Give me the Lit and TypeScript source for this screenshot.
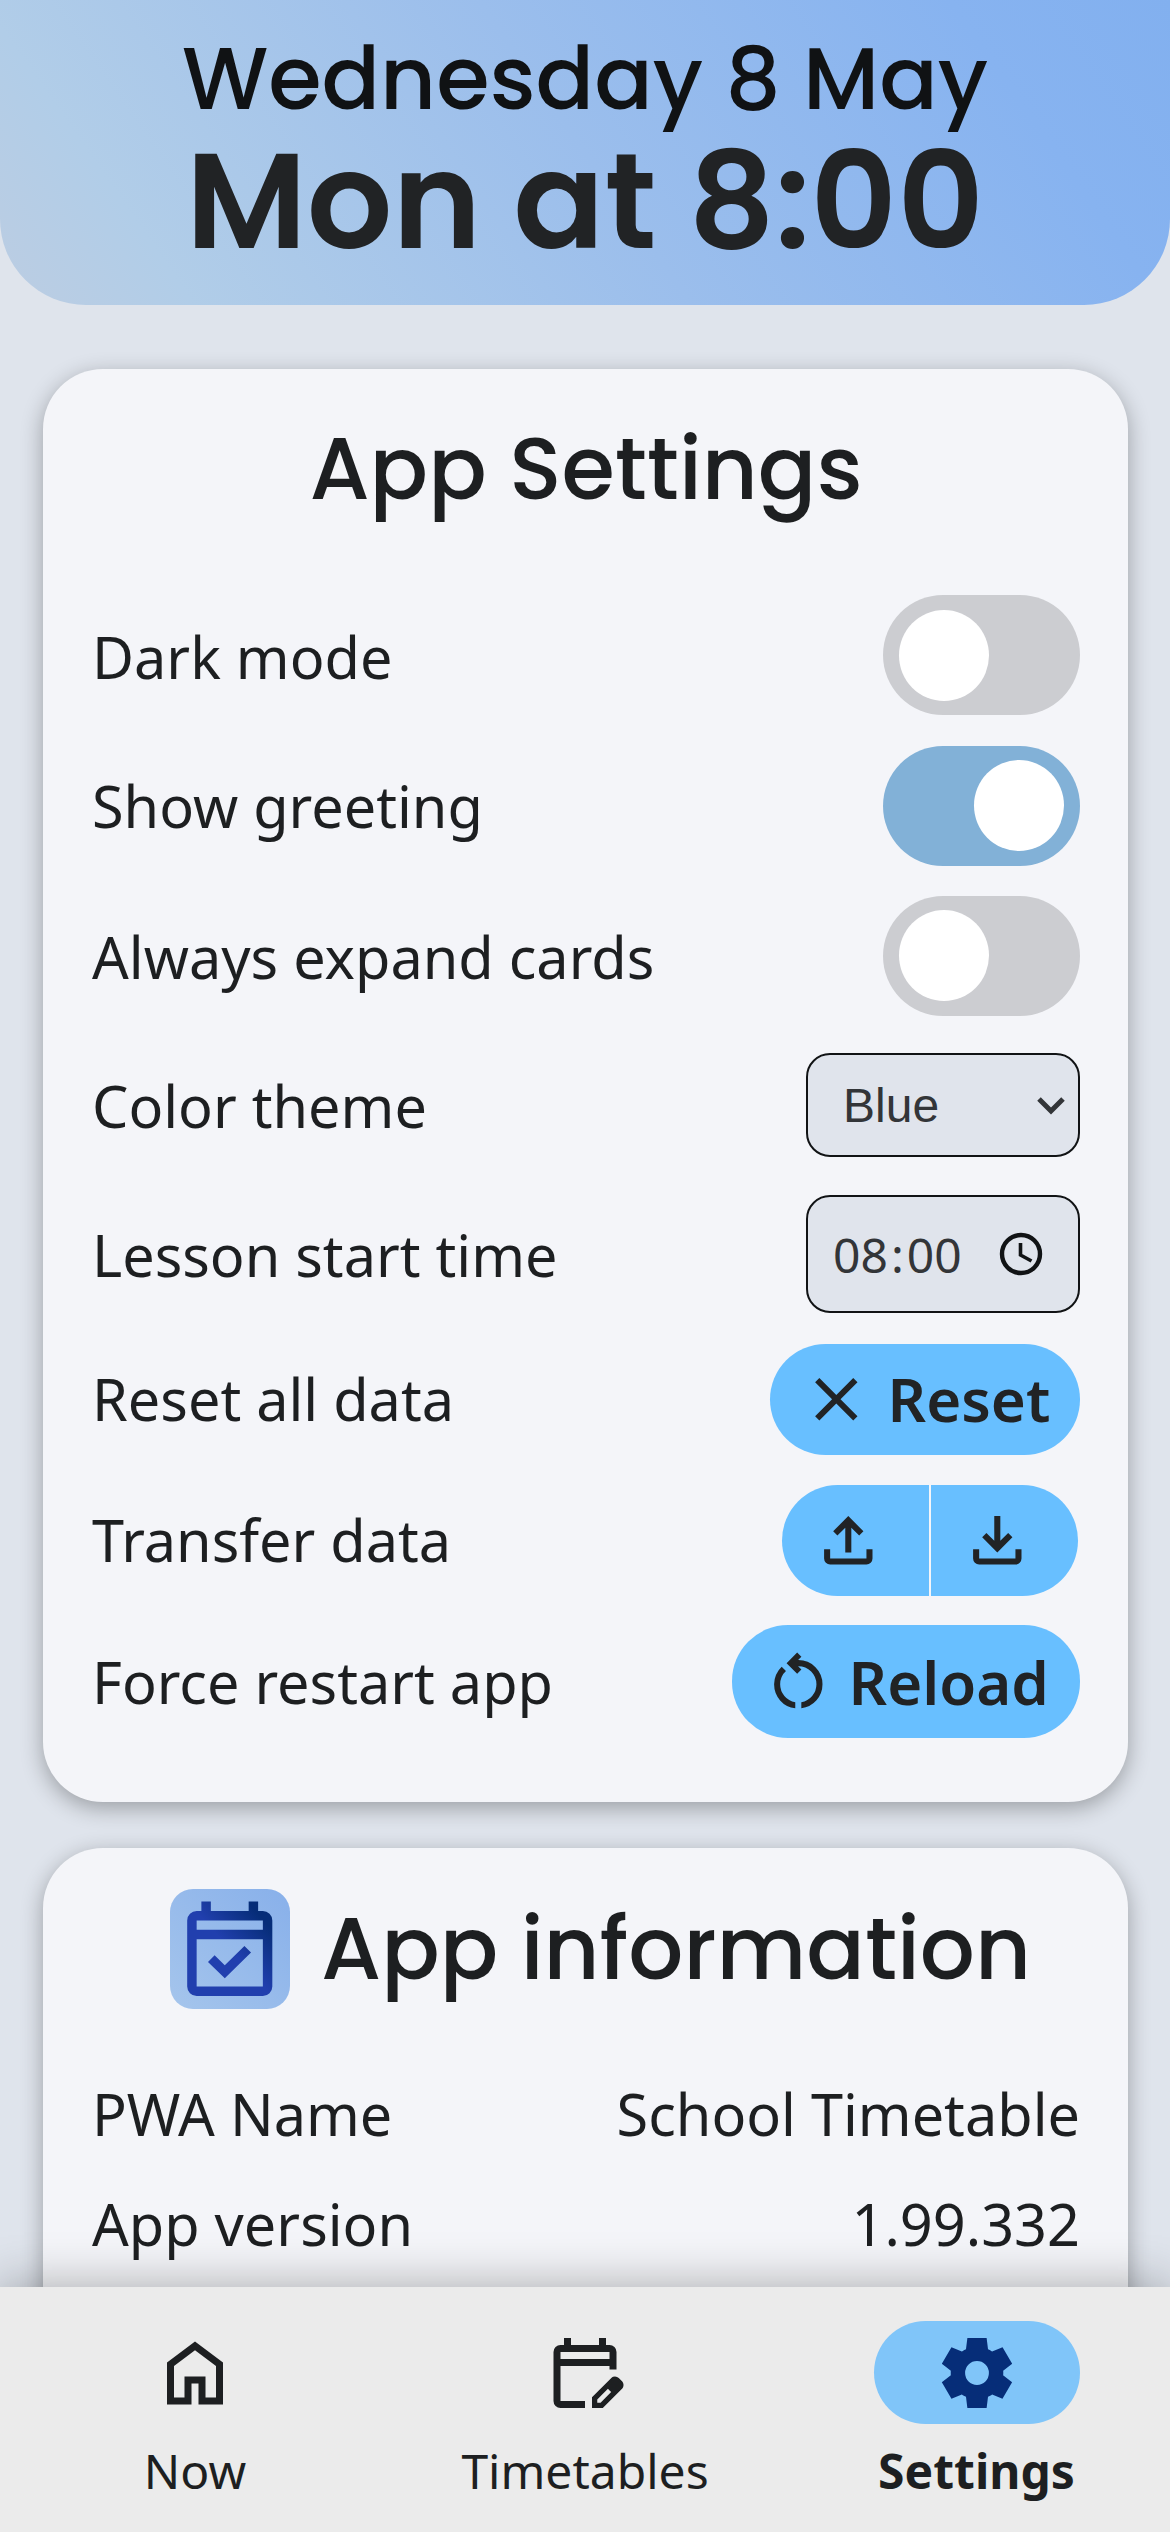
import { LitElement, html, css, svg } from "lit";
import { customElement } from "lit/decorators.js";

const icon = (cls: string, d: string) =>
  html`<svg class=${cls} viewBox="0 0 24 24" aria-hidden="true"><path d=${d}></path></svg>`;

const CLOSE = "M6.4 19 5 17.6l5.6-5.6L5 6.4 6.4 5l5.6 5.6L17.6 5 19 6.4 13.4 12l5.6 5.6-1.4 1.4-5.6-5.6Z";
const TRAY = "M6 20q-.825 0-1.412-.587Q4 18.825 4 18v-3h2v3h12v-3h2v3q0 .825-.587 1.413Q18.825 20 18 20Z";
const UPLOAD = "M11 16V7.85l-2.6 2.6L7 9l5-5 5 5-1.4 1.45-2.6-2.6V16Z" + TRAY;
const DOWNLOAD = "M12 16 7 11l1.4-1.45 2.6 2.6V4h2v8.15l2.6-2.6L17 11Z" + TRAY;
const RESTART =
  "M11 20.95q-3.025-.375-5.012-2.638Q4 16.05 4 13q0-1.65.65-3.163Q5.3 8.325 6.5 7.2l1.425 1.425q-.95.85-1.437 1.975Q6 11.725 6 13q0 2.2 1.4 3.887 1.4 1.688 3.6 2.063Zm2 0v-2q2.175-.4 3.588-2.075Q18 15.2 18 13q0-2.5-1.75-4.25T12 7h-.075l1.1 1.1-1.4 1.4-3.5-3.5 3.5-3.5 1.4 1.4-1.1 1.1H12q3.35 0 5.675 2.325Q20 9.65 20 13q0 3.025-1.987 5.288Q16.025 20.55 13 20.95Z";
const HOME = "M6 19h3v-6h6v6h3v-9l-6-4.5L6 10Zm-2 2V9l8-6 8 6v12h-7v-6h-2v6Z";
const EDIT_CALENDAR =
  "M5 22q-.825 0-1.412-.587Q3 20.825 3 20V6q0-.825.588-1.412Q4.175 4 5 4h1V2h2v2h8V2h2v2h1q.825 0 1.413.588Q21 5.175 21 6v5h-2v-1H5v10h7v2ZM5 8h14V6H5ZM14 22v-3.075l5.525-5.5q.225-.225.5-.325.275-.1.55-.1.3 0 .575.112.275.113.5.338l.925.925q.2.225.313.5.112.275.112.55 0 .275-.1.563-.1.287-.325.512l-5.5 5.5Zm1.5-1.5h.95l3.025-3.05-.45-.475-.475-.45-3.05 3.025Z";
const GEAR =
  "M9.25 22l-.4-3.2q-.325-.125-.612-.3-.288-.175-.563-.375L4.7 19.375l-2.75-4.75 2.575-1.95Q4.5 12.5 4.5 12.337v-.675q0-.162.025-.337L1.95 9.375l2.75-4.75 2.975 1.25q.275-.2.575-.375.3-.175.6-.3l.4-3.2h5.5l.4 3.2q.325.125.613.3.287.175.562.375l2.975-1.25 2.75 4.75-2.575 1.95q.025.175.025.337v.675q0 .163-.05.338l2.575 1.95-2.75 4.75-2.95-1.25q-.275.2-.575.375-.3.175-.6.3l-.4 3.2ZM12 8.6a3.4 3.4 0 1 0 0 6.8 3.4 3.4 0 0 0 0-6.8Z";
const EVENT_CHECK =
  "M10.95 18.25 7.4 14.8l1.4-1.4 2.15 2.1 4.15-4.1 1.4 1.4ZM5 22q-.825 0-1.413-.587Q3 20.825 3 20V6q0-.825.587-1.412Q4.175 4 5 4h1V2h2v2h8V2h2v2h1q.825 0 1.413.588Q21 5.175 21 6v14q0 .825-.587 1.413Q19.825 22 19 22Zm0-2h14V10H5ZM5 8h14V6H5Z";

@customElement("app-root")
export class AppRoot extends LitElement {
  static styles = css`
    :host {
      display: flex;
      flex-direction: column;
      width: 1170px;
      height: 2532px;
      overflow: hidden;
      background: #dfe4ec;
      color: #1d1f21;
      font-family: "Noto Sans", sans-serif;
    }
    * { box-sizing: border-box; }
    svg { display: block; flex: none; fill: currentColor; }
    .header {
      flex: none;
      height: 305px;
      padding-top: 33px;
      border-radius: 0 0 86px 86px;
      background: linear-gradient(55deg, #bccde2 0%, #b1cde8 14%, #9bbeec 50%, #87b3f0 84%, #82b0ef 100%);
      text-align: center;
      font-family: Poppins, sans-serif;
      white-space: nowrap;
    }
    .date { height: 92px; line-height: 92px; font-size: 86.4px; font-weight: 500; color: #101214; }
    .next { height: 152px; line-height: 152px; font-size: 134.4px; font-weight: 600; color: #212325; }
    .page { flex: 1; min-height: 0; padding: 64px 42px 0 43px; overflow: hidden; }
    .card {
      background: #f4f5f9;
      border-radius: 60px;
      padding: 0 48px 0 49px;
      box-shadow: 0 6px 22px rgba(0, 0, 0, 0.31);
    }
    .settings { height: 1433px; padding-top: 70px; margin-bottom: 46px; }
    .info { height: 600px; padding-top: 40px; }
    .title {
      display: flex;
      align-items: center;
      justify-content: center;
      height: 60px;
      margin: 0;
      font: 500 86.4px/60px Poppins, sans-serif;
      white-space: nowrap;
    }
    .rows { display: flex; flex-direction: column; margin-top: 81px; }
    .row { display: flex; align-items: center; justify-content: space-between; height: 149px; font-size: 57.6px; white-space: nowrap; }
    .row.first { height: 150px; }
    .row.second { height: 151px; }
    .row.tight { height: 141px; }
    .row.reset-row { height: 142px; }
    .low { padding-top: 2px; }
    .high { padding-bottom: 2px; }
    .toggle { display: flex; align-items: center; width: 197px; height: 120px; padding: 0 16px; border-radius: 60px; background: #cccdd1; }
    .toggle.on { justify-content: flex-end; background: #82b1d7; }
    .knob { width: 90px; height: 91px; border-radius: 50%; background: #fff; }
    .field { display: flex; align-items: center; width: 274px; border: 2px solid #111315; border-radius: 24px; background: #e0e4ec; color: #333538; font-size: 48px; }
    .select { height: 104px; padding-left: 35px; padding-top: 2px; font-family: "Liberation Sans", sans-serif; }
    .time { height: 118px; padding-left: 25px; padding-top: 1px; }
    .chevron { width: 30px; height: 20px; margin-left: auto; margin-right: 12px; fill: none; stroke: currentColor; stroke-width: 5; }
    .colon { padding: 0 3px; }
    .clock { width: 44px; height: 44px; margin-left: auto; margin-right: 35px; fill: none; stroke: #111315; stroke-width: 4.4; }
    .btn { display: flex; align-items: center; border-radius: 56px; background: #68bfff; color: #212325; font-weight: 600; font-size: 60px; }
    .reset { width: 310px; height: 111px; padding-left: 30px; gap: 15px; }
    .reload { width: 348px; height: 113px; padding-left: 30px; gap: 14px; }
    .i { width: 72.6px; height: 72.6px; }
    .split { display: flex; gap: 2px; width: 296px; margin-right: 2px; }
    .half { display: flex; align-items: center; width: 147px; height: 111px; padding-left: 30px; background: #68bfff; color: #212325; }
    .half.l { border-radius: 56px 0 0 56px; }
    .half.r { border-radius: 0 56px 56px 0; }
    .logo { display: flex; align-items: center; justify-content: center; width: 120px; height: 120px; border-radius: 23px; background: linear-gradient(45deg, #a5c5ec, #88b0ea); margin-right: 31px; flex: none; }
    .logo-mark { width: 113.5px; height: 113.5px; }
    .info .title { height: 121px; line-height: 121px; padding-left: 29px; }
    .info .rows { margin-top: 49px; }
    .info .row { height: 110px; }
    .nav {
      position: relative;
      flex: none;
      display: grid;
      grid-template-columns: repeat(3, 390px);
      height: 245px;
      background: #ebebeb;
      box-shadow: 0 0 48px rgba(0, 0, 0, 0.32);
    }
    .tab { display: flex; flex-direction: column; align-items: center; padding-top: 34px; font-size: 48px; }
    .pill { display: flex; align-items: center; justify-content: center; width: 206px; height: 103px; border-radius: 52px; }
    .tab.active { font-weight: 700; padding-left: 3px; }
    .active .pill { background: #80c5f9; color: #062d78; }
    .n { width: 84px; height: 84px; }
    .tab-label { line-height: 66px; margin-top: 14px; }
  `;

  private toggle(on: boolean) {
    return html`<span class="toggle ${on ? "on" : ""}"><span class="knob"></span></span>`;
  }

  render() {
    return html`
      <header class="header">
        <div class="date">Wednesday 8 May</div>
        <div class="next">Mon at 8:00</div>
      </header>
      <main class="page">
        <section class="card settings">
          <h2 class="title"><span>App Settings</span></h2>
          <div class="rows">
            <div class="row first"><span class="low">Dark mode</span>${this.toggle(false)}</div>
            <div class="row second"><span>Show greeting</span>${this.toggle(true)}</div>
            <div class="row"><span class="low">Always expand cards</span>${this.toggle(false)}</div>
            <div class="row">
              <span class="low">Color theme</span>
              <span class="field select">Blue
                <svg class="chevron" viewBox="0 0 30 20"><path d="M3 3 15 15 27 3"></path></svg>
              </span>
            </div>
            <div class="row">
              <span class="low">Lesson start time</span>
              <span class="field time"><span>08</span><span class="colon">:</span><span>00</span>
                <svg class="clock" viewBox="0 0 44 44"><circle cx="22" cy="22" r="19"></circle><path d="M21.5 11v12l11 6" stroke-width="3.6"></path></svg>
              </span>
            </div>
            <div class="row reset-row"><span class="high">Reset all data</span><span class="btn reset">${icon("i", CLOSE)}<span>Reset</span></span></div>
            <div class="row tight">
              <span class="high">Transfer data</span>
              <span class="split"><span class="half l">${icon("i", UPLOAD)}</span><span class="half r">${icon("i", DOWNLOAD)}</span></span>
            </div>
            <div class="row tight"><span>Force restart app</span><span class="btn reload">${icon("i", RESTART)}<span>Reload</span></span></div>
          </div>
        </section>
        <section class="card info">
          <h2 class="title">
            <span class="logo">
              <svg class="logo-mark" viewBox="0 0 24 24">
                ${svg`<defs><linearGradient id="ink" x1="0" y1="1" x2="1" y2="0"><stop offset="0.5" stop-color="#213fae"></stop><stop offset="0.85" stop-color="#062d78"></stop></linearGradient></defs>
                <path fill="url(#ink)" d=${EVENT_CHECK}></path>`}
              </svg>
            </span>
            <span>App information</span>
          </h2>
          <div class="rows">
            <div class="row"><span>PWA Name</span><span>School Timetable</span></div>
            <div class="row"><span>App version</span><span>1.99.332</span></div>
          </div>
        </section>
      </main>
      <nav class="nav">
        <div class="tab"><span class="pill">${icon("n", HOME)}</span><span class="tab-label">Now</span></div>
        <div class="tab"><span class="pill">${icon("n", EDIT_CALENDAR)}</span><span class="tab-label">Timetables</span></div>
        <div class="tab active"><span class="pill">${icon("n", GEAR)}</span><span class="tab-label">Settings</span></div>
      </nav>
    `;
  }
}
